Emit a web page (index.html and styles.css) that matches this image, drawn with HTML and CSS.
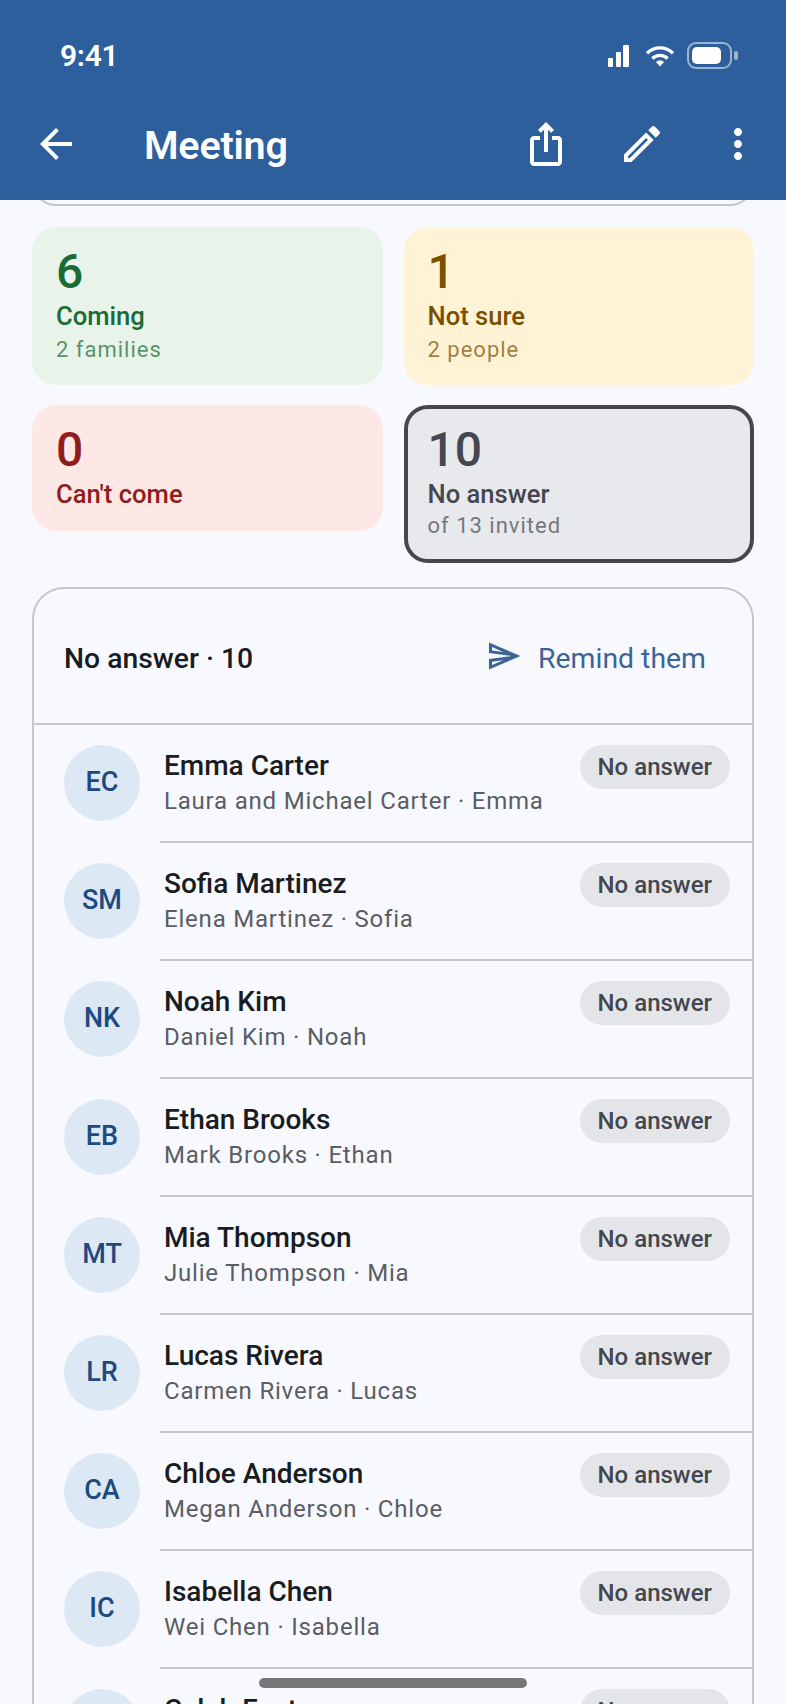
FILE: index.html
```html
<!DOCTYPE html>
<html lang="en">
<head>
  <meta charset="UTF-8" />
  <title>Meeting</title>
  <link rel="stylesheet" href="styles.css">
</head>
<body>
  <div class="screen">
    <header class="top">
      <div class="status">
        <span class="time">9:41</span>
        <div class="status-icons">
          <svg class="signal" width="21" height="22" viewBox="0 0 21 22" fill="#fff"><rect x="0" y="13" width="5" height="9" rx="1"/><rect x="8" y="7" width="5" height="15" rx="1"/><rect x="15" y="0" width="6" height="22" rx="1"/></svg>
          <svg class="wifi" width="30" height="22" viewBox="0 0 30 22" fill="none" stroke="#fff" stroke-width="3.4"><path d="M2 8.2a18.6 18.6 0 0 1 26 0"/><path d="M7.4 13.4a11 11 0 0 1 15.2 0"/><path d="M11 17l4 4.4 4-4.4a5.6 5.6 0 0 0-8 0z" fill="#fff" stroke="none"/></svg>
          <div class="battery"><div class="battery-fill"></div></div>
          <div class="battery-nub"></div>
        </div>
      </div>
      <div class="appbar">
        <svg class="icon" viewBox="0 0 24 24"><path d="M20 11H7.83l5.59-5.59L12 4l-8 8 8 8 1.41-1.41L7.83 13H20v-2z"/></svg>
        <h1 class="title">Meeting</h1>
        <div class="actions">
          <svg class="icon" viewBox="0 0 24 24"><path d="M16 5l-1.42 1.42-1.59-1.59V16h-1.98V4.83L9.42 6.42 8 5l4-4 4 4zm4 5v11c0 1.1-.9 2-2 2H6c-1.11 0-2-.9-2-2V10c0-1.11.89-2 2-2h3v2H6v11h12V10h-3V8h3c1.1 0 2 .89 2 2z"/></svg>
          <svg class="icon" viewBox="0 0 24 24"><path d="M14.06 9.02l.92.92L5.92 19H5v-.92l9.06-9.06M17.66 3c-.25 0-.51.1-.7.29l-1.83 1.83 3.75 3.75 1.83-1.83c.39-.39.39-1.02 0-1.41l-2.34-2.34c-.2-.2-.45-.29-.71-.29zm-3.6 3.19L3 17.25V21h3.75L17.81 9.94l-3.75-3.75z"/></svg>
          <svg class="icon" viewBox="0 0 24 24"><path d="M12 8c1.1 0 2-.9 2-2s-.9-2-2-2-2 .9-2 2 .9 2 2 2zm0 2c-1.1 0-2 .9-2 2s.9 2 2 2 2-.9 2-2-.9-2-2-2zm0 6c-1.1 0-2 .9-2 2s.9 2 2 2 2-.9 2-2-.9-2-2-2z"/></svg>
        </div>
      </div>
    </header>

    <main class="content">
      <div class="prev-card"></div>

      <section class="stats">
        <div class="stat stat-green">
          <div class="stat-num">6</div>
          <div class="stat-label">Coming</div>
          <div class="stat-sub">2 families</div>
        </div>
        <div class="stat stat-yellow">
          <div class="stat-num">1</div>
          <div class="stat-label">Not sure</div>
          <div class="stat-sub">2 people</div>
        </div>
        <div class="stat stat-red">
          <div class="stat-num">0</div>
          <div class="stat-label">Can't come</div>
        </div>
        <div class="stat stat-grey">
          <div class="stat-num">10</div>
          <div class="stat-label">No answer</div>
          <div class="stat-sub">of 13 invited</div>
        </div>
      </section>

      <section class="list-card">
        <div class="list-head">
          <span class="list-title">No answer · 10</span>
          <div class="remind">
            <svg class="send" viewBox="0 0 24 24"><path d="M4.01 6.03l7.51 3.22-7.52-1 .01-2.22m7.5 8.72L4 17.97v-2.22l7.51-1M2.01 3L2 10l15 2-15 2 .01 7L23 12 2.01 3z"/></svg>
            <span>Remind them</span>
          </div>
        </div>

        <div class="row">
          <div class="avatar">EC</div>
          <div class="who"><div class="name">Emma Carter</div><div class="parent">Laura and Michael Carter · Emma</div></div>
          <span class="chip">No answer</span>
        </div>
        <div class="row">
          <div class="avatar">SM</div>
          <div class="who"><div class="name">Sofia Martinez</div><div class="parent">Elena Martinez · Sofia</div></div>
          <span class="chip">No answer</span>
        </div>
        <div class="row">
          <div class="avatar">NK</div>
          <div class="who"><div class="name">Noah Kim</div><div class="parent">Daniel Kim · Noah</div></div>
          <span class="chip">No answer</span>
        </div>
        <div class="row">
          <div class="avatar">EB</div>
          <div class="who"><div class="name">Ethan Brooks</div><div class="parent">Mark Brooks · Ethan</div></div>
          <span class="chip">No answer</span>
        </div>
        <div class="row">
          <div class="avatar">MT</div>
          <div class="who"><div class="name">Mia Thompson</div><div class="parent">Julie Thompson · Mia</div></div>
          <span class="chip">No answer</span>
        </div>
        <div class="row">
          <div class="avatar">LR</div>
          <div class="who"><div class="name">Lucas Rivera</div><div class="parent">Carmen Rivera · Lucas</div></div>
          <span class="chip">No answer</span>
        </div>
        <div class="row">
          <div class="avatar">CA</div>
          <div class="who"><div class="name">Chloe Anderson</div><div class="parent">Megan Anderson · Chloe</div></div>
          <span class="chip">No answer</span>
        </div>
        <div class="row">
          <div class="avatar">IC</div>
          <div class="who"><div class="name">Isabella Chen</div><div class="parent">Wei Chen · Isabella</div></div>
          <span class="chip">No answer</span>
        </div>
        <div class="row">
          <div class="avatar">CF</div>
          <div class="who"><div class="name">Caleb Foster</div><div class="parent">Nina Foster · Caleb</div></div>
          <span class="chip">No answer</span>
        </div>
      </section>
    </main>

    <div class="home-bar"></div>
  </div>
</body>
</html>
```

FILE: styles.css
```css
* { box-sizing: border-box; }
html, body { margin: 0; padding: 0; }
body { background: #F8F9FF; color: #191C20; font-family: Roboto, "Noto Sans", sans-serif; }

.screen { position: relative; width: 786px; height: 1704px; overflow: hidden; display: flex; flex-direction: column; }

/* blue header */
.top { background: #2C5F9B; color: #fff; height: 200px; flex: none; }
.status { height: 88px; padding: 22px 48px 0 60px; display: flex; align-items: center; justify-content: space-between; }
.time { font-size: 30px; font-weight: 600; letter-spacing: -.3px; }
.status-icons { display: flex; align-items: center; margin-top: 1px; }
.signal { margin-right: 16px; margin-top: 1px; }
.wifi { margin-right: 12px; margin-top: 1px; }
.battery { width: 45px; height: 27px; border: 2px solid #ffffff88; border-radius: 9px; padding: 3px; }
.battery-fill { width: 29px; height: 100%; background: #fff; border-radius: 5px; }
.battery-nub { width: 4px; height: 9px; margin-left: 2px; background: #ffffff88; border-radius: 2px; }

.appbar { height: 112px; padding: 0 24px 0 32px; display: flex; align-items: center; }
.icon { width: 48px; height: 48px; fill: #fff; flex: none; }
.title { margin: 3px 0 0 64px; flex: 1; font-size: 39.5px; font-weight: 600; letter-spacing: -.2px; }
.actions { display: flex; gap: 48px; }

.content { flex: 1; overflow: hidden; padding: 0 32px; }
.prev-card { height: 60px; margin-top: -54px; border: 2px solid #C4C6D0; border-radius: 24px; }

/* stat tiles */
.stats { display: grid; grid-template-columns: 1fr 1fr; gap: 20px 21px; align-items: start; margin: 21px 0 24px; }
.stat { border-radius: 24px; padding: 17px 24px 19px; }
.stat-num { font-size: 48px; line-height: 56px; font-weight: 500; }
.stat-label { font-size: 25.6px; line-height: 32px; font-weight: 500; }
.stat-sub { margin-top: 2px; font-size: 22px; line-height: 32px; letter-spacing: 1px; opacity: .7; }
.stat-green { background: #E8F4EA; color: #1B6B35; }
.stat-yellow { background: #FFF3D6; color: #7A4F00; }
.stat-red { background: #FEE8E5; color: #8F1D1D; padding-bottom: 21px; }
.stat-grey { background: #E8E9ED; color: #44474E; border: 4px solid #44474E; padding: 13px 20px 17px; }
.stat-grey .stat-sub { margin-top: 0; }

/* no answer list */
.list-card { border: 2px solid #C4C6D0; border-bottom: none; border-radius: 32px 32px 0 0; }
.list-head { height: 136px; padding: 4px 46px 0 30px; display: flex; align-items: center; justify-content: space-between; border-bottom: 2px solid #C4C6D0; }
.list-title { font-size: 28.3px; font-weight: 500; }
.remind { display: flex; align-items: center; gap: 16px; color: #3C6497; font-size: 28.4px; }
.send { width: 36px; height: 36px; fill: #3C6497; margin-top: -4px; }

.row { position: relative; height: 118px; padding: 20px 22px 0 30px; display: flex; align-items: flex-start; }
.row::after { content: ""; position: absolute; left: 126px; right: 0; bottom: 0; height: 2px; background: #C4C6D0; }
.avatar { width: 76px; height: 76px; flex: none; border-radius: 50%; background: #DCE8F4; color: #1D4A80; display: flex; align-items: center; justify-content: center; padding-bottom: 2px; font-size: 27px; font-weight: 500; }
.who { flex: 1; margin-left: 24px; padding-top: 3px; }
.name { font-size: 28px; line-height: 36px; font-weight: 500; }
.parent { font-size: 24px; line-height: 34px; letter-spacing: .8px; color: #5A5D63; }
.chip { height: 44px; padding: 0 18px; border-radius: 22px; background: #E4E5E9; color: #44474E; display: flex; align-items: center; font-size: 24px; font-weight: 500; }

.home-bar { position: absolute; left: 259px; top: 1678px; width: 268px; height: 10px; border-radius: 5px; background: #77777A; }
```
